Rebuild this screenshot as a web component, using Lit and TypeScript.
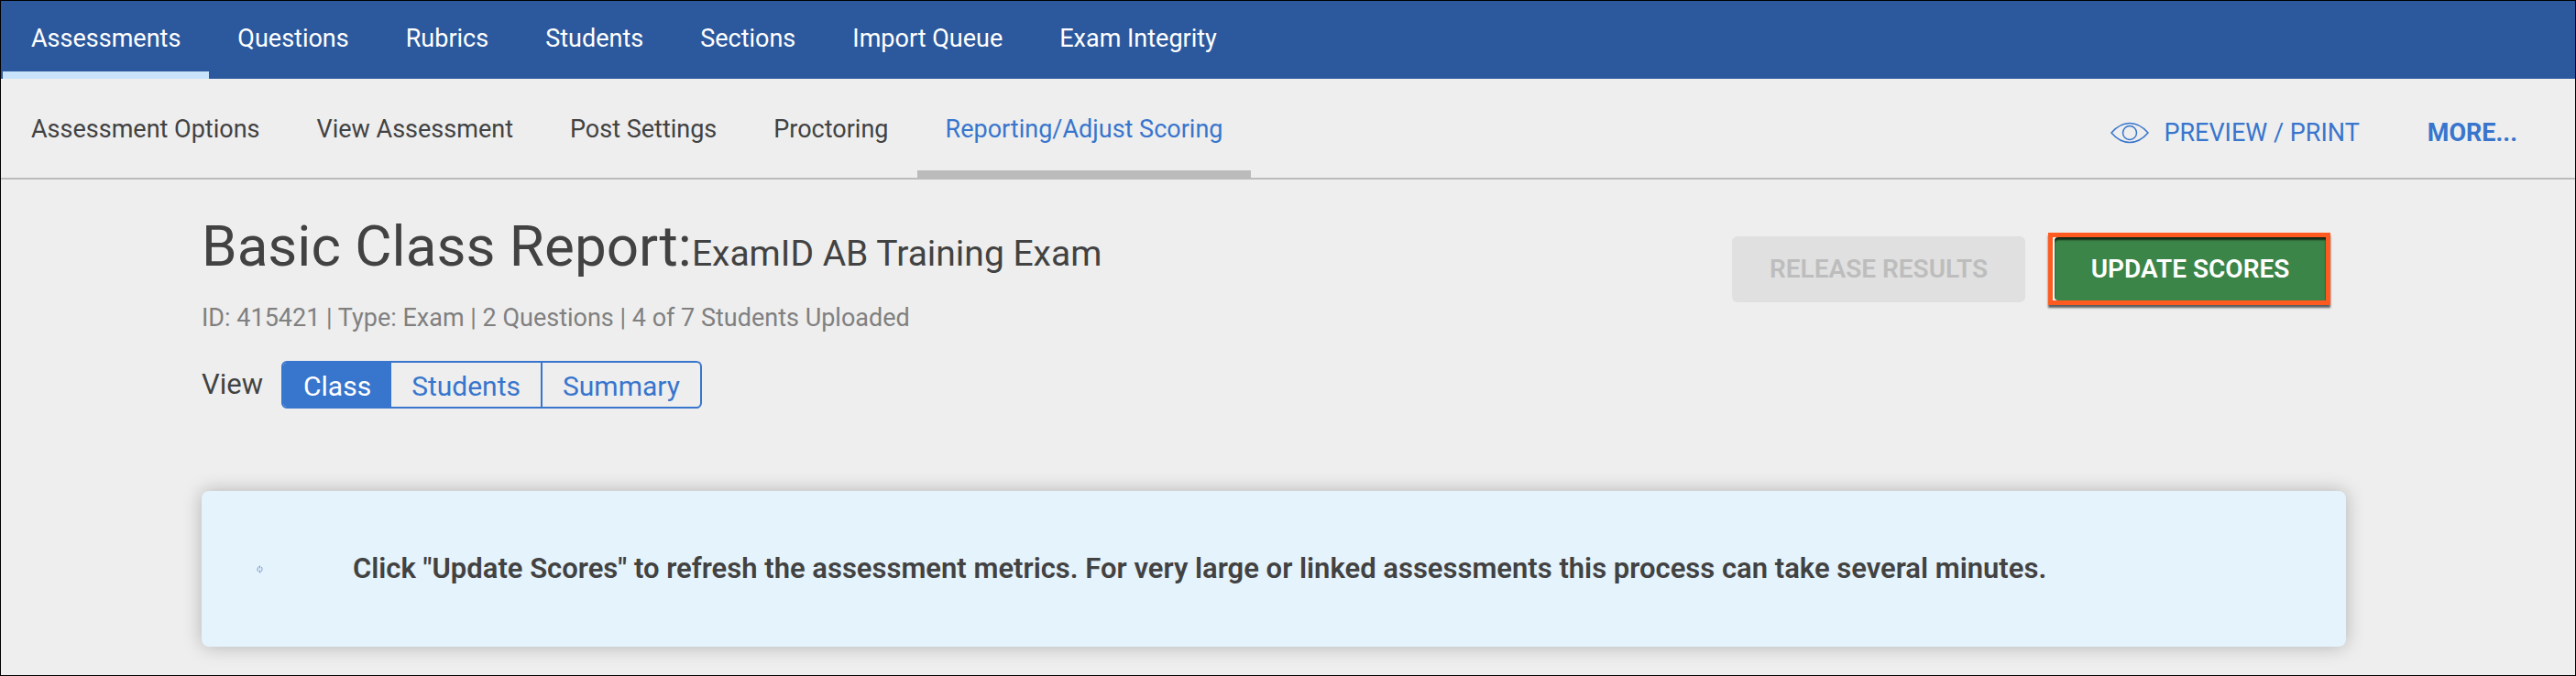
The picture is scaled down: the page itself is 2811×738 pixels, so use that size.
import { LitElement, html, css } from "lit";
import { customElement, state } from "lit/decorators.js";
import { classMap } from "lit/directives/class-map.js";

const SECTIONS = ["Assessments", "Questions", "Rubrics", "Students", "Sections", "Import Queue", "Exam Integrity"];
const PAGES = ["Assessment Options", "View Assessment", "Post Settings", "Proctoring", "Reporting/Adjust Scoring"];
const VIEWS = ["Class", "Students", "Summary"];

@customElement("app-root")
export class AppRoot extends LitElement {
  @state() private view = "Class";

  static styles = css`
    :host {
      display: block;
      box-sizing: border-box;
      min-height: 100vh;
      border: 1px solid #000;
      background: #eee;
      color: #424242;
      font-family: Roboto, "Open Sans", sans-serif;
      font-size: 27px;
      line-height: 32px;
    }
    * {
      box-sizing: border-box;
    }
    a {
      color: inherit;
      text-decoration: none;
      white-space: nowrap;
    }
    button {
      font: inherit;
      white-space: nowrap;
      cursor: pointer;
    }
    .primary,
    .secondary {
      display: flex;
      padding-left: 2px;
    }
    .primary {
      background: #2c599d;
      color: #fff;
    }
    .tab {
      display: flex;
      align-items: center;
      padding: 4px 31px 0;
      height: 85px;
      border-bottom: 8px solid transparent;
    }
    .primary .current {
      border-color: #c8e3fa;
    }
    .secondary {
      border-bottom: 2px solid #bbb;
      justify-content: space-between;
    }
    .tabs {
      display: flex;
    }
    .secondary .tab {
      height: 108px;
      padding-top: 10px;
    }
    .secondary .current {
      color: #3875cd;
      border-color: #bbb;
    }
    .tools {
      display: flex;
      align-items: center;
      gap: 74px;
      padding: 10px 63px 0 0;
      color: #3875cd;
    }
    .preview {
      display: flex;
      align-items: center;
      gap: 16px;
    }
    .eye {
      width: 42px;
      height: 24px;
      fill: none;
      stroke: currentColor;
      stroke-width: 1.5;
    }
    .more {
      font-weight: 700;
    }
    main {
      padding: 37px 250px 30px 219px;
    }
    .head {
      display: flex;
      justify-content: space-between;
      align-items: flex-start;
    }
    h1 {
      margin: 0 0 26px;
      font-size: 62px;
      line-height: 72px;
      font-weight: 400;
    }
    .exam {
      font-size: 39px;
      line-height: 40px;
    }
    .meta {
      margin: 0;
      color: #808080;
    }
    .actions {
      display: flex;
      align-items: center;
      gap: 25px;
      padding: 21px 17px 0 0;
    }
    .action {
      border: 0;
      font-size: 28px;
      font-weight: 600;
      padding: 0 36px;
    }
    .release {
      min-width: 320px;
      height: 72px;
      border-radius: 6px;
      background: #e0e0e0;
      color: #bdbdbd;
      cursor: default;
    }
    .highlight {
      display: flex;
      min-width: 308px;
      height: 79px;
      padding-left: 2px;
      border: 5px solid #ff5a1f;
      background: #fff;
      box-shadow: 0 3px 2px rgba(0, 0, 0, 0.6);
    }
    .update {
      flex: 1;
      border-radius: 4px 0 0 4px;
      background: #3c8548;
      color: #fff;
      box-shadow: inset 0 3px 2px rgba(0, 0, 0, 0.7);
    }
    .views {
      display: flex;
      align-items: center;
      gap: 20px;
      margin-top: 31px;
      font-size: 31px;
    }
    .segments {
      display: flex;
      height: 52px;
      overflow: hidden;
      border: 2px solid #3875cd;
      border-radius: 6px;
    }
    .segment {
      padding: 4px 22px 0;
      border: 0;
      background: transparent;
      color: #3875cd;
      font-size: 30px;
    }
    .segment + .segment {
      border-left: 2px solid #3875cd;
    }
    .segment.selected {
      background: #3875cd;
      color: #fff;
    }
    .segment.selected + .segment {
      border-left: 0;
    }
    .notice {
      display: flex;
      align-items: center;
      gap: 98px;
      min-height: 170px;
      margin-top: 90px;
      padding: 0 60px;
      border-radius: 8px;
      background: #e5f3fc;
      box-shadow: 0 0 20px rgba(0, 0, 0, 0.25);
      font-size: 31px;
      line-height: 40px;
      font-weight: 600;
    }
    .notice p {
      margin: 0;
    }
    .refresh {
      flex: none;
      width: 7px;
      height: 9px;
      fill: none;
      stroke: #6c93c4;
    }
  `;

  render() {
    return html`
      <nav class="primary" aria-label="Main">
        ${SECTIONS.map((s, i) => html`<a href="#" class=${classMap({ tab: true, current: i === 0 })}>${s}</a>`)}
      </nav>
      <div class="secondary">
        <nav class="tabs" aria-label="Assessment">
          ${PAGES.map((p) => html`<a href="#" class=${classMap({ tab: true, current: p.startsWith("Reporting") })}>${p}</a>`)}
        </nav>
        <div class="tools">
          <a href="#" class="preview">
            <svg class="eye" viewBox="0 0 42 24" aria-hidden="true">
              <path d="M1 12C7 5 14 1.500 21 1.500S35 5 41 12C35 19 28 22.500 21 22.500S7 19 1 12Z" />
              <circle cx="21" cy="12" r="7.500" />
            </svg>
            PREVIEW / PRINT
          </a>
          <a href="#" class="more">MORE...</a>
        </div>
      </div>
      <main>
        <div class="head">
          <div>
            <h1>Basic Class Report:<span class="exam">ExamID AB Training Exam</span></h1>
            <p class="meta">ID: 415421 | Type: Exam | 2 Questions | 4 of 7 Students Uploaded</p>
          </div>
          <div class="actions">
            <button class="action release" disabled>RELEASE RESULTS</button>
            <div class="highlight"><button class="action update">UPDATE SCORES</button></div>
          </div>
        </div>
        <div class="views">
          <span id="view-label">View</span>
          <div class="segments" role="group" aria-labelledby="view-label">
            ${VIEWS.map(
              (v) => html`<button
                class=${classMap({ segment: true, selected: v === this.view })}
                aria-pressed=${v === this.view}
                @click=${() => (this.view = v)}
              >${v}</button>`
            )}
          </div>
        </div>
        <section class="notice">
          <svg class="refresh" viewBox="0 0 8 10" aria-hidden="true">
            <path d="M3 1.500C1 2.500 .5 6 2 8M5 8.500C7 7.500 7.500 4 6 2M4 .5V4M4 6V9.500" />
          </svg>
          <p>Click "Update Scores" to refresh the assessment metrics. For very large or linked assessments this process can take several minutes.</p>
        </section>
      </main>
    `;
  }
}
